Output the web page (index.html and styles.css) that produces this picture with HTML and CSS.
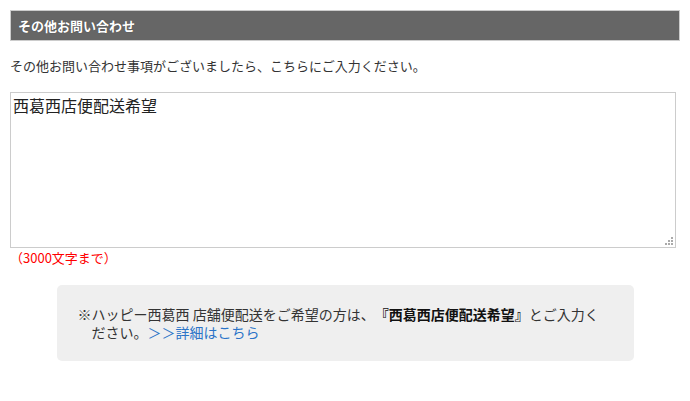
FILE: index.html
```html
<!DOCTYPE html>
<html lang="ja">
<head>
    <meta charset="UTF-8">
    <meta name="viewport" content="width=device-width, initial-scale=1.0">
    <title>その他お問い合わせ</title>
    <link rel="stylesheet" href="styles.css">
</head>
<body>
    <div class="inquiry-section">
        <h3 class="section-title">その他お問い合わせ</h3>
        <p class="lead">その他お問い合わせ事項がございましたら、こちらにご入力ください。</p>
        <div class="text-wrap">
            <textarea class="inquiry-text" name="inquiry">西葛西店便配送希望</textarea>
        </div>
        <p class="limit-note">（3000文字まで）</p>
        <div class="notice-box">
            <p>※ハッピー西葛西 店舗便配送をご希望の方は、<strong>『西葛西店便配送希望』</strong>とご入力ください。<a href="#">＞＞詳細はこちら</a></p>
        </div>
    </div>
</body>
</html>
```

FILE: styles.css
```css
/* General Styles */
body {
    margin: 0;
    padding: 10px;
    background-color: #fff;
    color: #333;
    font-family: "Noto Sans CJK JP", "Noto Sans", sans-serif;
    font-size: 13px;
    text-spacing-trim: space-all;
}
.inquiry-section {
    width: 670px;
}
.section-title {
    margin: 0;
    height: 29px;
    line-height: 29px;
    padding: 0 7px;
    background-color: #666;
    border: 1px solid #ccc;
    color: #fff;
    font-size: 13px;
    font-weight: bold;
    text-shadow: 0 0 1px rgba(0, 0, 0, 0.4);
}
.lead {
    margin: 15px 0 17px;
    line-height: 19px;
}

/* textarea with a dotted grip in the corner */
.text-wrap {
    position: relative;
    width: 666px;
}
.text-wrap::after {
    content: "";
    position: absolute;
    right: 3px;
    bottom: 3px;
    width: 8px;
    height: 8px;
    background:
        linear-gradient(#aaa, #aaa) 6px 0 / 2px 2px no-repeat,
        linear-gradient(#aaa, #aaa) 3px 3px / 2px 2px no-repeat,
        linear-gradient(#aaa, #aaa) 6px 3px / 2px 2px no-repeat,
        linear-gradient(#aaa, #aaa) 0 6px / 2px 2px no-repeat,
        linear-gradient(#aaa, #aaa) 3px 6px / 2px 2px no-repeat,
        linear-gradient(#aaa, #aaa) 6px 6px / 2px 2px no-repeat;
    pointer-events: none;
}
.inquiry-text {
    display: block;
    box-sizing: border-box;
    width: 666px;
    height: 156px;
    margin: 0;
    padding: 2px;
    border: 1px solid #ccc;
    font-family: "Noto Sans CJK JP", sans-serif;
    font-size: 16px;
    line-height: 20px;
    color: #222;
    resize: none;
    text-spacing-trim: space-all;
}
.limit-note {
    margin: 0 0 18px;
    line-height: 19px;
    color: #f00;
}
.notice-box {
    box-sizing: border-box;
    width: 577px;
    margin: 0 auto;
    padding: 20px 26px 20px 21px;
    background-color: #efefef;
    border-radius: 5px;
    font-size: 14px;
    line-height: 18px;
}
.notice-box p {
    margin: 0;
    padding-left: 14px;
    text-indent: -14px;
}
.notice-box strong {
    color: #111;
}
.notice-box a {
    color: #2b74c8;
    text-decoration: none;
}
```
